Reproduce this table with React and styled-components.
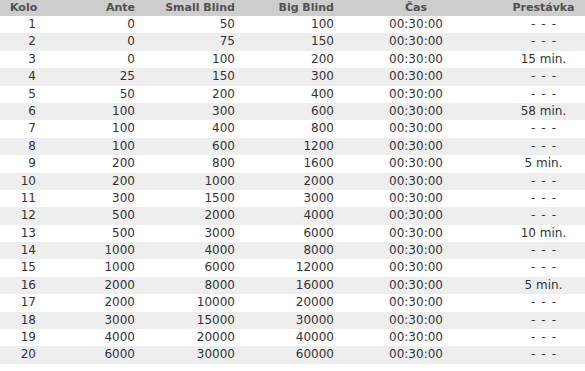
import styled, { createGlobalStyle } from "styled-components";

const GlobalStyle = createGlobalStyle`
  body {
    margin: 0;
    background: #fff;
    font-family: "DejaVu Sans", Verdana, sans-serif;
  }
`;

const Table = styled.div`
  width: 585px;
  display: grid;
  grid-template-columns: 40px 99px 100px 99px 156px 91px;
`;

const HeadCell = styled.div`
  height: 16px;
  line-height: 16px;
  background: #cdcdcd;
  color: #505050;
  font-size: 11px;
  font-weight: bold;
  text-align: ${({ align }) => align || "right"};
  padding: ${({ pad }) => pad || "0 4px"};
  white-space: nowrap;
`;

const Cell = styled.div`
  height: 17.4px;
  line-height: 17.4px;
  background: ${({ odd }) => (odd ? "#fff" : "#eeeeee")};
  color: #333;
  font-size: 12px;
  text-align: ${({ align }) => align || "right"};
  padding: ${({ pad }) => pad || "0 4px"};
  white-space: nowrap;
`;

const rows = [
  [1, 0, 50, 100, null],
  [2, 0, 75, 150, null],
  [3, 0, 100, 200, 15],
  [4, 25, 150, 300, null],
  [5, 50, 200, 400, null],
  [6, 100, 300, 600, 58],
  [7, 100, 400, 800, null],
  [8, 100, 600, 1200, null],
  [9, 200, 800, 1600, 5],
  [10, 200, 1000, 2000, null],
  [11, 300, 1500, 3000, null],
  [12, 500, 2000, 4000, null],
  [13, 500, 3000, 6000, 10],
  [14, 1000, 4000, 8000, null],
  [15, 1000, 6000, 12000, null],
  [16, 2000, 8000, 16000, 5],
  [17, 2000, 10000, 20000, null],
  [18, 3000, 15000, 30000, null],
  [19, 4000, 20000, 40000, null],
  [20, 6000, 30000, 60000, null],
];

export default function App() {
  return (
    <>
      <GlobalStyle />
      <Table>
        <HeadCell align="left" pad="0 0 0 10px">Kolo</HeadCell>
        <HeadCell>Ante</HeadCell>
        <HeadCell>Small Blind</HeadCell>
        <HeadCell>Big Blind</HeadCell>
        <HeadCell align="center">Čas</HeadCell>
        <HeadCell align="center" pad="0 0 0 8px">Prestávka</HeadCell>
        {rows.map(([kolo, ante, small, big, pause]) => {
          const odd = kolo % 2 === 1;
          return [
            <Cell key={`k${kolo}`} odd={odd}>{kolo}</Cell>,
            <Cell key={`a${kolo}`} odd={odd}>{ante}</Cell>,
            <Cell key={`s${kolo}`} odd={odd}>{small}</Cell>,
            <Cell key={`b${kolo}`} odd={odd}>{big}</Cell>,
            <Cell key={`c${kolo}`} odd={odd} align="center">00:30:00</Cell>,
            <Cell key={`p${kolo}`} odd={odd} align="center" pad="0 0 0 8px">
              {pause ? `${pause} min.` : "-\u2002-\u2002-"}
            </Cell>,
          ];
        })}
      </Table>
    </>
  );
}
